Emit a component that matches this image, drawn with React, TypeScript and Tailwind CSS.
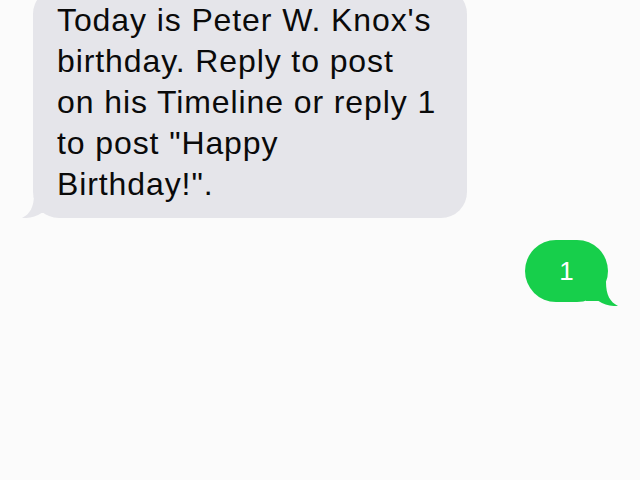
import React from 'react'

function Tail({ color, className = '' }: { color: string; className?: string }) {
  return (
    <svg className={className} width="32" height="24" viewBox="0 0 32 24" fill={color}>
      <path d="M12 0 C12 13 8 20 0 24 C7 24.5 14 22.5 19.5 19 L32 19 L32 0 Z" />
    </svg>
  )
}

export default function App() {
  return (
    <div
      className="w-[640px] h-[480px] overflow-hidden bg-[#fbfbfb] flex flex-col"
      style={{ fontFamily: '"Liberation Sans", Arial, sans-serif' }}
    >
      {/* Incoming message */}
      <div className="relative ml-[33px] -mt-[12px] w-[434px] rounded-[26px] bg-[#e5e5ea] pl-[24px] pr-[16px] pt-[12px] pb-[13px] text-[32px] leading-[41px] tracking-[0.9px] text-[#0a0a0a]">
        <Tail color="#e5e5ea" className="absolute -left-[11px] bottom-[0px]" />
        <p className="relative">
          Today is Peter W. Knox's
          <br />
          birthday. Reply to post
          <br />
          on his Timeline or reply 1
          <br />
          to post "Happy
          <br />
          Birthday!".
        </p>
      </div>

      {/* Outgoing message */}
      <div className="flex justify-end mr-[32px] mt-[22px]">
        <div className="relative w-[83px] h-[62px] rounded-[31px] bg-[#17cf4b] flex items-center justify-center">
          <Tail color="#17cf4b" className="absolute -right-[10px] -bottom-[4px] -scale-x-100" />
          <span className="relative text-white text-[26px] leading-none">1</span>
        </div>
      </div>
    </div>
  )
}
